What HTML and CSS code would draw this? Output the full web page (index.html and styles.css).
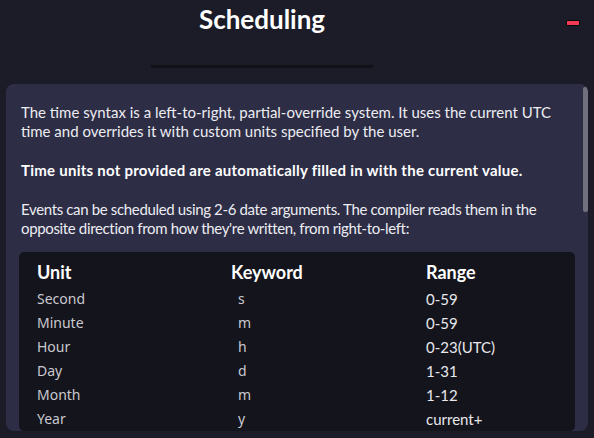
FILE: index.html
```html
<!DOCTYPE html>
<html lang="en">
<head>
<meta charset="utf-8">
<title>Scheduling</title>
<link rel="stylesheet" href="styles.css">
</head>
<body>
<div class="app">
  <header class="head">
    <h1 class="title">Scheduling</h1>
    <div class="divider"></div>
    <button class="min-btn" aria-label="Minimize"></button>
  </header>
  <section class="card">
    <div class="scroll">
      <p class="para">The time syntax is a left-to-right, partial-override system. It uses the current UTC time and overrides it with custom units specified by the user.</p>
      <p class="para strong">Time units not provided are automatically filled in with the current value.</p>
      <p class="para last">Events can be scheduled using 2-6 date arguments. The compiler reads them in the opposite direction from how they're written, from right-to-left:</p>
      <div class="table">
        <div class="th">Unit</div><div class="th">Keyword</div><div class="th">Range</div>
        <div class="td">Second</div><div class="td kw">s</div><div class="td rg">0-59</div>
        <div class="td">Minute</div><div class="td kw">m</div><div class="td rg">0-59</div>
        <div class="td">Hour</div><div class="td kw">h</div><div class="td rg">0-23(UTC)</div>
        <div class="td">Day</div><div class="td kw">d</div><div class="td rg">1-31</div>
        <div class="td">Month</div><div class="td kw">m</div><div class="td rg">1-12</div>
        <div class="td">Year</div><div class="td kw">y</div><div class="td rg">current+</div>
      </div>
    </div>
    <div class="thumb"></div>
  </section>
</div>
</body>
</html>
```
FILE: styles.css
```css
html, body {
  margin: 0;
  padding: 0;
  background: #1c1c29;
  height: 100%;
  overflow: hidden;
}
body {
  font-family: "Lato", "Open Sans", sans-serif;
  color: #ececf2;
}
.app {
  display: flex;
  flex-direction: column;
  height: 438px;
}
.head {
  position: relative;
  height: 84px;
  display: flex;
  flex-direction: column;
  align-items: center;
  padding-right: 70px;
  box-sizing: border-box;
}
.title {
  margin: 3px 0 0 0;
  font-size: 26px;
  line-height: 32px;
  font-weight: 700;
  color: #ffffff;
}
.divider {
  margin-top: 30px;
  width: 222px;
  height: 3px;
  background: #111117;
}
.min-btn {
  position: absolute;
  left: 566px;
  top: 20px;
  width: 14px;
  height: 6px;
  padding: 0;
  border: 1px solid #0a0a0e;
  background: #f23a55;
  border-radius: 1px;
}
.card {
  position: relative;
  margin: 0 6px;
  height: 347px;
  background: #2d2d45;
  border-radius: 8px;
  overflow: hidden;
}
.scroll {
  height: 100%;
  overflow: hidden;
  padding: 19px 13px 0 13px;
  box-sizing: border-box;
}
.para {
  margin: 0 0 20px 0;
  padding: 0 2px;
  font-size: 15px;
  line-height: 19px;
}
.strong {
  font-weight: 700;
  color: #ffffff;
  letter-spacing: 0.25px;
}
.para.last {
  margin-bottom: 14px;
  letter-spacing: -0.35px;
}
.table {
  background: #14141c;
  border-radius: 5px;
  display: grid;
  grid-template-columns: 194px 195px 1fr;
  grid-template-rows: 30px;
  grid-auto-rows: 24px;
  padding: 5px 18px 0 18px;
}
.th {
  font-size: 18px;
  font-weight: 700;
  color: #ffffff;
  line-height: 30px;
}
.td {
  font-family: "Noto Sans", "Open Sans", sans-serif;
  font-size: 14px;
  line-height: 24px;
  color: #c9c9cf;
}
.td.rg {
  font-family: "Lato", sans-serif;
  font-size: 15px;
  color: #e8e8ec;
}
.kw {
  padding-left: 7px;
}
.thumb {
  position: absolute;
  right: 0;
  top: 3px;
  width: 5px;
  height: 125px;
  background: #70707f;
  border-radius: 2px;
}
```
